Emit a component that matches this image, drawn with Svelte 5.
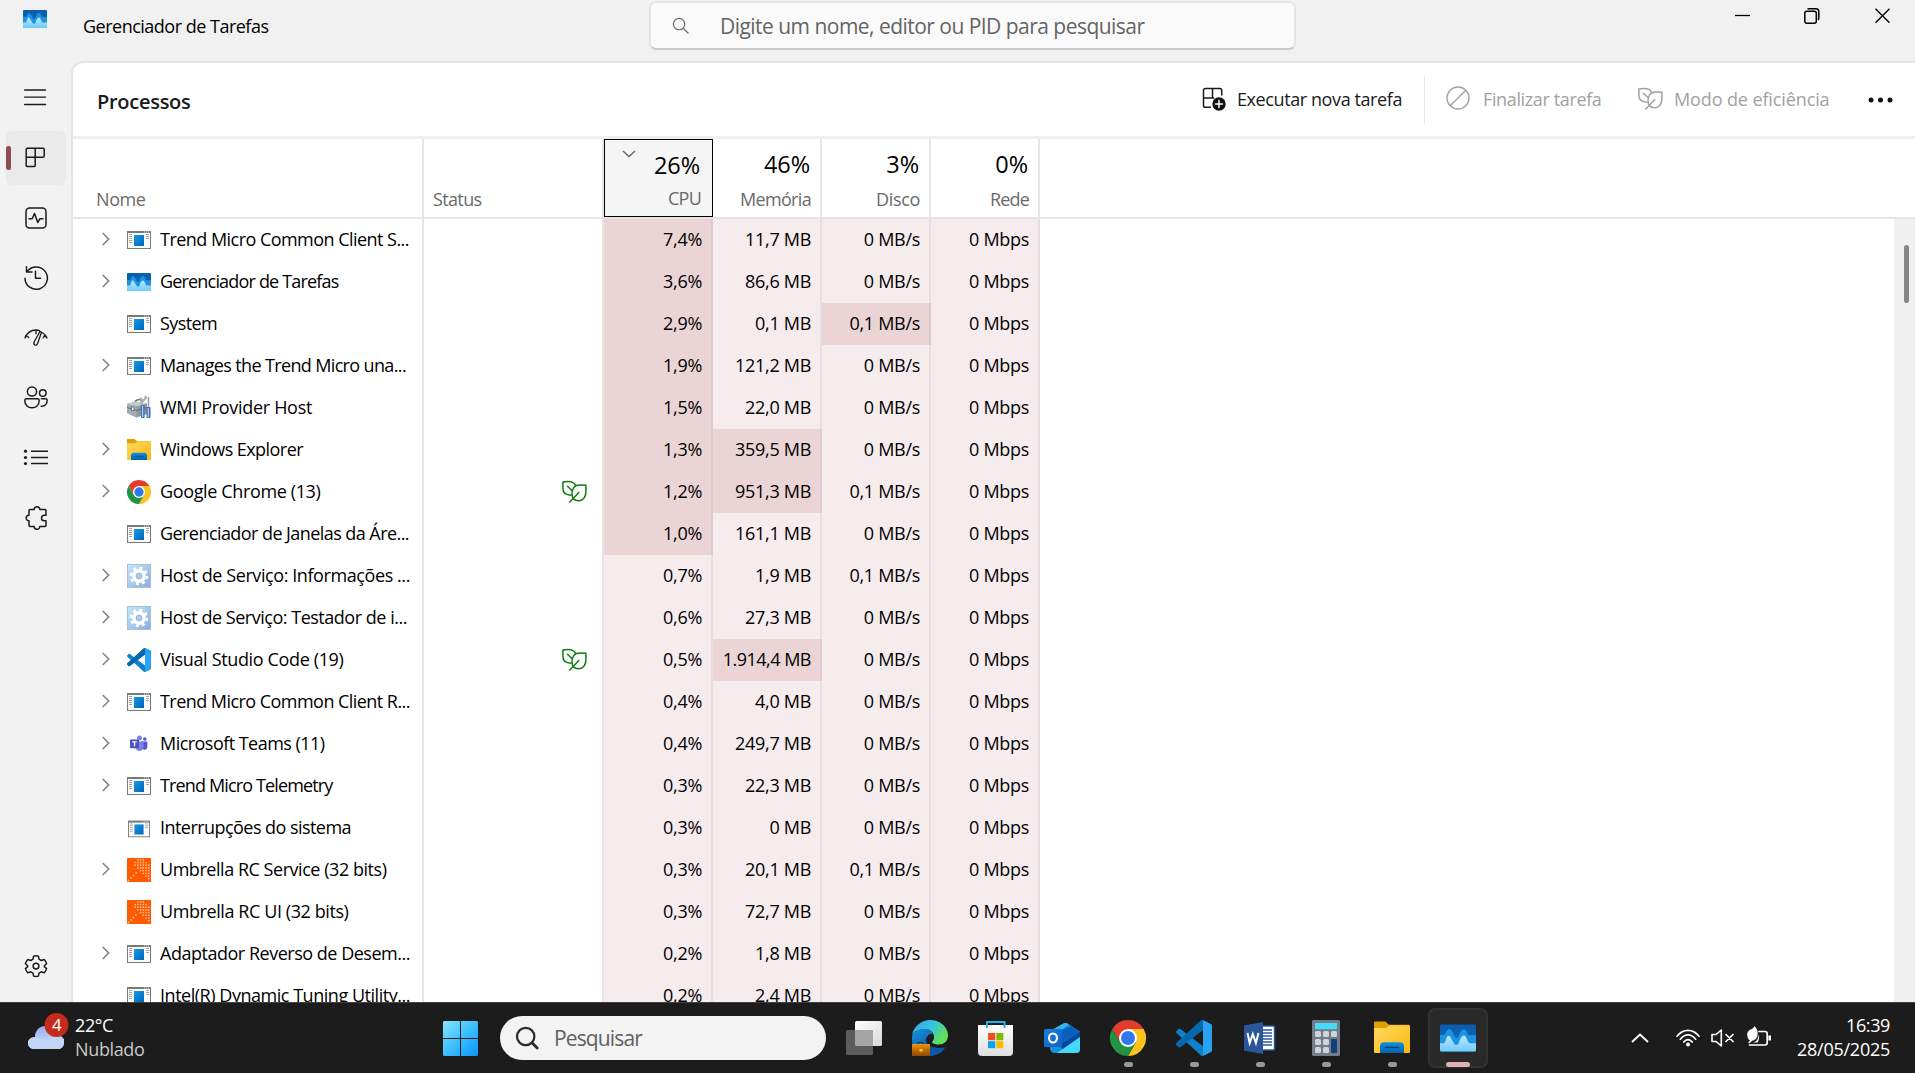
<script>
  const processes = [
    { name: 'Trend Micro Common Client S...', w: 249, icon: 'app', open: true, v: ['7,4%', '11,7 MB', '0 MB/s', '0 Mbps'], hot: [0] },
    { name: 'Gerenciador de Tarefas', w: 178.5, icon: 'taskmgr', open: true, v: ['3,6%', '86,6 MB', '0 MB/s', '0 Mbps'], hot: [0] },
    { name: 'System', w: 57, icon: 'app', v: ['2,9%', '0,1 MB', '0,1 MB/s', '0 Mbps'], hot: [0, 2] },
    { name: 'Manages the Trend Micro una...', w: 246, icon: 'app', open: true, v: ['1,9%', '121,2 MB', '0 MB/s', '0 Mbps'], hot: [0] },
    { name: 'WMI Provider Host', w: 152, icon: 'wmi', v: ['1,5%', '22,0 MB', '0 MB/s', '0 Mbps'], hot: [0] },
    { name: 'Windows Explorer', w: 143, icon: 'folder', open: true, v: ['1,3%', '359,5 MB', '0 MB/s', '0 Mbps'], hot: [0, 1] },
    { name: 'Google Chrome (13)', w: 160.5, icon: 'chrome', open: true, leaf: true, v: ['1,2%', '951,3 MB', '0,1 MB/s', '0 Mbps'], hot: [0, 1] },
    { name: 'Gerenciador de Janelas da Áre...', w: 249, icon: 'app', v: ['1,0%', '161,1 MB', '0 MB/s', '0 Mbps'], hot: [0] },
    { name: 'Host de Serviço: Informações ...', w: 250, icon: 'gear', open: true, v: ['0,7%', '1,9 MB', '0,1 MB/s', '0 Mbps'], hot: [] },
    { name: 'Host de Serviço: Testador de i...', w: 247, icon: 'gear', open: true, v: ['0,6%', '27,3 MB', '0 MB/s', '0 Mbps'], hot: [] },
    { name: 'Visual Studio Code (19)', w: 183.5, icon: 'vscode', open: true, leaf: true, v: ['0,5%', '1.914,4 MB', '0 MB/s', '0 Mbps'], hot: [1] },
    { name: 'Trend Micro Common Client R...', w: 250, icon: 'app', open: true, v: ['0,4%', '4,0 MB', '0 MB/s', '0 Mbps'], hot: [] },
    { name: 'Microsoft Teams (11)', w: 164.5, icon: 'teams', open: true, v: ['0,4%', '249,7 MB', '0 MB/s', '0 Mbps'], hot: [] },
    { name: 'Trend Micro Telemetry', w: 172.5, icon: 'app', open: true, v: ['0,3%', '22,3 MB', '0 MB/s', '0 Mbps'], hot: [] },
    { name: 'Interrupções do sistema', w: 191, icon: 'appsmall', v: ['0,3%', '0 MB', '0 MB/s', '0 Mbps'], hot: [] },
    { name: 'Umbrella RC Service (32 bits)', w: 226.5, icon: 'umbrella', open: true, v: ['0,3%', '20,1 MB', '0,1 MB/s', '0 Mbps'], hot: [] },
    { name: 'Umbrella RC UI (32 bits)', w: 188.5, icon: 'umbrella', v: ['0,3%', '72,7 MB', '0 MB/s', '0 Mbps'], hot: [] },
    { name: 'Adaptador Reverso de Desem...', w: 250, icon: 'app', open: true, v: ['0,2%', '1,8 MB', '0 MB/s', '0 Mbps'], hot: [] },
    { name: 'Intel(R) Dynamic Tuning Utility...', w: 250, icon: 'app', v: ['0,2%', '2,4 MB', '0 MB/s', '0 Mbps'], hot: [] }
  ];

  const columns = [
    { pct: '26%', label: 'CPU', lw: 33, sorted: true },
    { pct: '46%', label: 'Memória', lw: 71 },
    { pct: '3%', label: 'Disco', lw: 44 },
    { pct: '0%', label: 'Rede', lw: 39 }
  ];

  const nav = ['processes', 'performance', 'history', 'startup', 'users', 'details', 'services'];

  const taskbar = [
    { icon: 'taskview' },
    { icon: 'edge' },
    { icon: 'store' },
    { icon: 'outlook' },
    { icon: 'chrome', running: true },
    { icon: 'vscode', running: true },
    { icon: 'word', running: true },
    { icon: 'calc', running: true },
    { icon: 'folder', running: true },
    { icon: 'taskmgr', running: true, active: true }
  ];

  // Tightens or loosens letter spacing so a label occupies the given width.
  function fit(node, width) {
    const n = node.textContent.length;
    const natural = node.getBoundingClientRect().width;
    node.style.letterSpacing = (width - natural) / n + 'px';
  }

  const dots = [];
  for (let r = 0; r < 8; r++) {
    for (let c = 0; c < 8; c++) {
      if (c > r - 0.5 && r + c > 2 && c - r < 5 - r * 0.1 + 1) dots.push([2.8 + c * 2.7, 1.8 + r * 2.7]);
    }
  }
</script>

{#snippet leaf()}
  <svg class="leaf" viewBox="0 0 25 22" fill="none" stroke="currentColor" stroke-width="1.5" stroke-linecap="round" stroke-linejoin="round">
    <path d="M9 14.2C4 14 .9 11.500 .9 7.500V1.100C5 .3 11.500 .2 13.500 4.300" />
    <path d="M23.900 4.200V11c0 5-3 8.700-7.200 8.700-4.200 0-6.700-2.600-6.700-6.600 0-5.400 2-9.200 8-9.200 2.200 0 4 .1 5.900.3z" />
    <path d="M5.500 5.200l4.200 4M16.800 11.500l-9 9.500" />
  </svg>
{/snippet}

{#snippet picture(kind)}
  {#if kind === 'app' || kind === 'appsmall'}
    <svg viewBox="0 0 24 24" class:small={kind === 'appsmall'}>
      <defs><linearGradient id="appg" x1="0" y1="0" x2="1" y2="1"><stop offset="0" stop-color="#149be6" /><stop offset="1" stop-color="#0463b8" /></linearGradient></defs>
      <rect x=".5" y="3.500" width="23" height="17" fill="#fafafa" stroke="#7a7a77" />
      <rect x="0" y="3" width="24" height="2" fill="#7a7a77" />
      <path d="M17 4h1m1 0h1m1 0h1" stroke="#e8e8e8" />
      <path d="M2 6.500h3M2 8.500h3M2 10.500h3M2 12.500h3M2 14.500h3M19 6.500h3M19 8.500h3M19 10.500h3" stroke="#a4a4a4" />
      <rect x="7" y="7" width="10" height="11" fill="url(#appg)" />
    </svg>
  {:else if kind === 'taskmgr'}
    <svg viewBox="0 0 24 24">
      <defs>
        <linearGradient id="tm1" x1="0" y1="0" x2="0" y2="1"><stop offset="0" stop-color="#0a5cad" /><stop offset="1" stop-color="#0f6fc4" /></linearGradient>
        <linearGradient id="tm2" x1="0" y1="0" x2="0" y2="1"><stop offset="0" stop-color="#b9e6ff" /><stop offset="1" stop-color="#6fcbfa" /></linearGradient>
      </defs>
      <rect y="3" width="24" height="18" rx="1" fill="url(#tm1)" />
      <path d="M0 10h2.500C4 10 4 6.200 6 6.200c1.500 0 1.700 1 2.600 2.300.7 1.200 1.100 3.500 2.400 3.500 1.500 0 1.700-2.300 2.500-3.800.7-1.100 1-2.100 2.500-2.100 2 0 2.200 4.100 3.700 4.100H24V20H0z" fill="#1c93dd" />
      <path d="M0 15.500h2.500c1.300 0 1.600-5 3.200-5 1.200 0 1.500 1.500 2.300 2.800.9 1.300 1.500 3.400 3 3.400 1.600 0 1.800-2.900 2.700-4.300.7-1 1.200-2 2.300-2 1.900 0 2.200 5.100 4 5.100h4V20a1 1 0 0 1-1 1H1a1 1 0 0 1-1-1z" fill="url(#tm2)" />
    </svg>
  {:else if kind === 'wmi'}
    <svg viewBox="0 0 24 24">
      <path d="M8 6.500c0-3 6-4 6.500-1.500v2" fill="none" stroke="#70777c" stroke-width="1.500" />
      <path d="M0 8l9-2.500 11 2V18L9.500 21.500 0 17z" fill="#8c979e" />
      <path d="M0 8l9-2.500 11 2-10.500 3z" fill="#c3cbd0" />
      <path d="M0 8l9.500 2.500v11L0 17z" fill="#a4adb3" />
      <path d="M0 11.500l9.500 3 10-3" fill="none" stroke="#5f696f" />
      <rect x="4.500" y="11" width="2.500" height="3.500" fill="#edf1f3" stroke="#575f64" stroke-width=".7" />
      <path d="M13 2l3 3 3-3-1-2M15 4l-1 6" stroke="#a7adb1" stroke-width="2" fill="none" />
      <path d="M21.500 1v10" stroke="#9aa0a5" stroke-width="1.600" />
      <rect x="14" y="9" width="3.600" height="13" rx="1" fill="#3e6fb4" /><rect x="15" y="10" width="1.200" height="11" fill="#b8d3f3" />
      <rect x="19.500" y="11" width="4" height="11" rx="1" fill="#3e6fb4" /><rect x="20.700" y="12" width="1.200" height="9" fill="#b8d3f3" />
    </svg>
  {:else if kind === 'folder'}
    <svg viewBox="0 0 24 24">
      <defs>
        <linearGradient id="fo1" x1="0" y1="0" x2="1" y2="1"><stop offset="0" stop-color="#ffd961" /><stop offset="1" stop-color="#fbb80d" /></linearGradient>
        <linearGradient id="fo2" x1="0" y1="0" x2="0" y2="1"><stop offset="0" stop-color="#1392de" /><stop offset="1" stop-color="#0560b0" /></linearGradient>
      </defs>
      <path d="M0 1.800q0-.8.800-.8H7.500L10 3.200H23q1 0 1 1V8H0z" fill="#dfa006" />
      <path d="M0 5.300H8L10.500 3.500H23.200q.8 0 .8.800V21.200q0 .8-.8.800H.8q-.8 0-.8-.8z" fill="url(#fo1)" />
      <path d="M4 22v-4.500q0-2.700 2.700-2.700h10.600q2.700 0 2.700 2.700V22z" fill="url(#fo2)" />
      <path d="M7.200 18.300h9.600" stroke="#05427f" stroke-width=".9" />
    </svg>
  {:else if kind === 'chrome'}
    <svg viewBox="0 0 48 48">
      <path d="M3.215 12A24 24 0 0 1 44.785 12L46 14.500H24L13.600 30z" fill="#e33b2e" />
      <path d="M44.785 12A24 24 0 0 1 24 48L34.392 30 24 12z" fill="#fcc31e" />
      <path d="M24 48A24 24 0 0 1 3.215 12L13.608 30 34.392 30z" fill="#229342" />
      <circle cx="24" cy="24" r="12" fill="#fff" /><circle cx="24" cy="24" r="9.300" fill="#3079ec" />
    </svg>
  {:else if kind === 'gear'}
    <svg viewBox="0 0 24 24">
      <defs><linearGradient id="ge" x1="0" y1="0" x2="1" y2="1"><stop offset="0" stop-color="#c2eafb" /><stop offset="1" stop-color="#8aaae2" /></linearGradient></defs>
      <rect x=".5" y=".5" width="23" height="23" fill="url(#ge)" stroke="#a9c0d2" />
      <circle cx="12" cy="12" r="8" fill="none" stroke="#fff" stroke-width="2.600" stroke-dasharray="3.140 3.140" />
      <circle cx="12" cy="12" r="4.900" fill="none" stroke="#fff" stroke-width="4" />
      <circle cx="12" cy="12" r="3" fill="#a9cdf0" stroke="#8ba9cf" stroke-width=".7" />
    </svg>
  {:else if kind === 'vscode'}
    <svg viewBox="0 0 24 24">
      <path d="M23.150 2.587L18.210.21a1.494 1.494 0 0 0-1.705.29l-9.460 8.630-4.120-3.128a.999.999 0 0 0-1.276.057L.327 7.261A1 1 0 0 0 .326 8.740L3.899 12 .326 15.260a1 1 0 0 0 .001 1.479L1.650 17.940a.999.999 0 0 0 1.276.057l4.120-3.128 9.460 8.630a1.492 1.492 0 0 0 1.704.29l4.942-2.377A1.500 1.500 0 0 0 24 20.060V3.939a1.500 1.500 0 0 0-.85-1.352zm-5.146 14.861L10.826 12l7.178-5.448v10.896z" fill="#0f80cc" />
      <path d="M7.045 9.130L3.899 12 .326 15.260a1 1 0 0 0 .001 1.479L1.650 17.940a1 1 0 0 0 1.276.057L18 6.550V.15L16.500.5z" fill="#0568ac" />
      <path d="M18.004.12L23.150 2.587A1.500 1.500 0 0 1 24 3.939V20.060a1.500 1.500 0 0 1-.85 1.352L18.004 23.880z" fill="#27a3f1" />
    </svg>
  {:else if kind === 'teams'}
    <svg viewBox="0 0 24 24">
      <circle cx="12.500" cy="6" r="2.500" fill="#7b83eb" /><circle cx="17.800" cy="7" r="1.800" fill="#5059c9" />
      <path d="M14 9.500h6.300v5.200a3 3 0 0 1-4 2.800z" fill="#5059c9" />
      <path d="M8.500 9.500h8v5.700a4.200 4.200 0 0 1-8 1.300z" fill="#7b83eb" />
      <rect x="3" y="7.500" width="9" height="8.700" rx=".8" fill="#4b53bc" />
      <path d="M5.300 9.900h4.400M7.500 9.900v4.300" stroke="#fff" stroke-width="1.300" />
    </svg>
  {:else if kind === 'umbrella'}
    <svg viewBox="0 0 24 24">
      <rect width="24" height="24" rx=".6" fill="#ff5a00" />
      {#each dots as [x, y]}<circle cx={x} cy={y} r=".85" fill="#ffc09c" />{/each}
      <g fill="#ffc09c"><circle cx="1.500" cy="22.500" r=".9" /><circle cx="4" cy="20" r=".9" /><circle cx="6.500" cy="17.500" r=".9" /><circle cx="9" cy="15" r=".9" /></g>
    </svg>
  {:else if kind === 'taskview'}
    <svg viewBox="0 0 36 36">
      <defs><linearGradient id="tv" x1="0" y1="0" x2="1" y2="1"><stop offset="0" stop-color="#fff" /><stop offset="1" stop-color="#d8d8d8" /></linearGradient></defs>
      <rect x="9" y="1" width="27" height="25" rx="1.500" fill="url(#tv)" />
      <rect y="10" width="27" height="25" rx="1.500" fill="#5c5c5c" />
      <path d="M9 10h16.500q1.500 0 1.500 1.500V26H10.500Q9 26 9 24.500z" fill="#a5a5a5" />
    </svg>
  {:else if kind === 'edge'}
    <svg viewBox="0 0 36 36">
      <defs>
        <linearGradient id="ed1" x1="0" y1="0" x2="1" y2=".5"><stop offset="0" stop-color="#2fa9f2" /><stop offset=".55" stop-color="#35c4dc" /><stop offset="1" stop-color="#61e356" /></linearGradient>
        <linearGradient id="ed2" x1="0" y1="0" x2=".6" y2="1"><stop offset="0" stop-color="#1593dc" /><stop offset="1" stop-color="#0a56ac" /></linearGradient>
        <linearGradient id="ed3" x1="0" y1="0" x2="0" y2="1"><stop offset="0" stop-color="#ee9513" /><stop offset=".5" stop-color="#c06a08" /><stop offset="1" stop-color="#8d4a02" /></linearGradient>
      </defs>
      <path d="M18 36c6.500 0 12.500-3.600 15.500-9-4 1.300-10 1.500-13-1.500-3-2.700-5.500-7-3.500-12L4 12C1 15 0 18 0 20v6z" fill="#0e58a9" />
      <path d="M0 18c0-5 6-9 12-9 4 0 8 2 9 5-5-1-7 4-7 8 0 5 2 11 6 13.800C7 37 0 28 0 18z" fill="url(#ed2)" />
      <path d="M0 16C1 7 9 0 18 0c10.500 0 18 7.500 18 15.500 0 6-4.500 9-9.500 9-4 0-7-1.300-7-2.700 0-.8 2.500-2 2.500-5.300 0-4-4-7.500-9.500-7.500C6.500 9 1.500 12 0 16z" fill="url(#ed1)" />
      <path d="M20.500 14.500c-3.500-.7-6.500 2-6.500 5.500 0 2.500 1.500 4.500 3 5.500 5 3 12 2.200 16.500-.5-4.500.5-12 .500-13.500-2.500 0-1.500 2-2.500 2-5 0-1.200-.5-2.200-1.500-3z" fill="#1c1c1c" />
      <path d="M6 24v-1.500h5V24" fill="none" stroke="#3b2504" stroke-width="1" />
      <rect y="24" width="18" height="12" fill="url(#ed3)" /><rect x="7.500" y="29" width="3" height="2.500" fill="#ffd02e" />
    </svg>
  {:else if kind === 'store'}
    <svg viewBox="0 0 36 36">
      <defs><linearGradient id="st" x1="0" y1="0" x2="0" y2="1"><stop offset="0" stop-color="#fff" /><stop offset="1" stop-color="#dedede" /></linearGradient></defs>
      <path d="M0 5h35v27q0 4-4 4h-27q-4 0-4-4z" fill="url(#st)" />
      <path d="M9 8V2h17.500v6" fill="none" stroke="#25b2ea" stroke-width="1.900" />
      <path d="M10 13h7.300v7.300h-7.300z" fill="#f25022" /><path d="M18.300 13h7v7.300h-7z" fill="#7fba00" />
      <path d="M10 21.200h7.300v7h-7.300z" fill="#00a4ef" /><path d="M18.300 21.200h7v7h-7z" fill="#ffb900" />
    </svg>
  {:else if kind === 'outlook'}
    <svg viewBox="0 0 36 36">
      <defs><linearGradient id="ou" x1="0" y1="0" x2="1" y2="1"><stop offset="0" stop-color="#1a7fdc" /><stop offset="1" stop-color="#0a62c4" /></linearGradient></defs>
      <path d="M6 11L20 3.300q1.500-.8 3 0L36 11.500V29q0 4-4 4H11q-5 0-5-5z" fill="#1791dc" />
      <path d="M6 11L20 3.300q1.500-.8 3 0l2 1.200L12 13z" fill="#35b7ee" />
      <path d="M27 6l9 5.700v1L18 24v-8L14 12z" fill="#0a60c0" />
      <path d="M36 12v8L19 30l-3-5z" fill="#08459a" />
      <path d="M36 17v12q0 4-4 4H13z" fill="#46d8fb" />
      <rect y="9" width="18" height="18" rx="1.500" fill="url(#ou)" />
      <ellipse cx="9" cy="18" rx="4" ry="4.500" fill="none" stroke="#fff" stroke-width="2.200" />
    </svg>
  {:else if kind === 'word'}
    <svg viewBox="0 0 36 36">
      <rect x="17" y="6" width="15.500" height="24" rx="1" fill="#fff" stroke="#2b579a" stroke-width="1.500" />
      <path d="M19 10h11M19 13h11M19 16h11M19 19h11M19 22h11M19 25h11" stroke="#2b579a" stroke-width="1.300" />
      <path d="M2 5.500L21 2v32L2 30.500z" fill="#2b579a" />
      <path d="M5.500 13l2.200 10L10.800 14l3.100 9 2.600-10" fill="none" stroke="#fff" stroke-width="2" />
    </svg>
  {:else if kind === 'calc'}
    <svg viewBox="0 0 36 36">
      <rect x="4" width="28" height="36" rx="1.500" fill="#737b84" />
      <rect x="7" y="3" width="22" height="6.200" rx=".8" fill="#45dcfb" />
      <g fill="#cfd3dc">
        <rect x="7" y="11" width="6" height="6" rx="1.500" /><rect x="15" y="11" width="6" height="6" rx="1.500" /><rect x="23" y="11" width="6" height="6" rx="1.500" />
        <rect x="7" y="19" width="6" height="6" rx="1.500" /><rect x="15" y="19" width="6" height="6" rx="1.500" />
        <rect x="7" y="27" width="6" height="6" rx="1.500" /><rect x="15" y="27" width="6" height="6" rx="1.500" />
      </g>
      <rect x="23" y="19" width="6" height="14" rx="1" fill="#10407f" />
    </svg>
  {/if}
{/snippet}

{#snippet navIcon(kind)}
  <svg class="nav-icon" viewBox="0 0 24 24" fill="none" stroke="#1b1b1b" stroke-width="1.500" stroke-linecap="round" stroke-linejoin="round">
    {#if kind === 'menu'}
      <path d="M.6 4h21M.6 11.200h21M.6 18.500h21" stroke-width="1.300" />
    {:else if kind === 'processes'}
      <path d="M3.500 2.200H19q1.200 0 1.200 1.200v6.600q0 1.200-1.200 1.200H2.200M11.200 2.200v17.200q0 1.200-1.200 1.200H3.400q-1.200 0-1.200-1.200V3.400q0-1.200 1.200-1.200" />
    {:else if kind === 'performance'}
      <rect x="2" y="2" width="20" height="20" rx="3.500" />
      <path d="M5 12.800h3.200l2.300-5.300 3.300 9 2-3.700H19" />
    {:else if kind === 'history'}
      <path d="M2.500.7v5.300H8M3 5.700A11.200 11.200 0 1 1 1 12.200M11.500 5.200v7h5" />
    {:else if kind === 'startup'}
      <path d="M1 12C3 7 7 4 12 4c1.500 0 2.500.2 3.500.6M1 12l.8-2.500 3 2M12 4.200v3.500M16 5.500l-5.500 9.800c-2 3.800 1.800 5.500 3.200 2L17.500 6.200zM18.500 6.800c2 1.200 3.500 3 4.500 5.200M19 12l1.500-2.500L23 12" stroke-width="1.300" />
    {:else if kind === 'users'}
      <circle cx="8" cy="5.500" r="4.600" /><circle cx="18.800" cy="7" r="3.300" />
      <path d="M2.500 12.700h11q1.700 0 1.700 1.700c0 5-3.500 7.300-7.200 7.300S.8 19.500 .8 14.400q0-1.700 1.700-1.700zM17.500 12.700h4q1.700 0 1.700 1.500c0 4-2.500 6.300-6 6" />
    {:else if kind === 'details'}
      <path d="M7 5.200h17M7 11.500h17M7 17.500h17" stroke-linecap="butt" /><g fill="#1b1b1b" stroke="none"><circle cx="1.500" cy="5.200" r="1.600" /><circle cx="1.500" cy="11.500" r="1.600" /><circle cx="1.500" cy="17.500" r="1.600" /></g>
    {:else if kind === 'services'}
      <path d="M10.200 3.500a2.800 2.800 0 0 1 5.600 0H20.800q1.200 0 1.200 1.200V9.200H20.300a2.800 2.800 0 0 0 0 5.600H22V19.300q0 1.200-1.200 1.200H15.800a2.800 2.800 0 0 1-5.600 0H6.200q-1.200 0-1.200-1.200V14.800a2.800 2.800 0 0 1 0-5.600V4.700q0-1.200 1.200-1.200z" />
    {:else if kind === 'settings'}
      <path d="M9.600 2.200q2.400-.8 4.800 0l.6 3 2.300 1.300 2.900-1q1.800 1.900 2.400 4.200L20.300 11.700v.9l2.300 2q-.7 2.400-2.400 4.200l-2.900-1L15 19.100l-.6 3q-2.400.7-4.800 0l-.6-3-2.300-1.300-2.900 1Q2.100 16.900 1.400 14.600l2.300-2v-.9L1.400 9.700Q2.100 7.400 3.800 5.500l2.900 1L9 5.200z" />
      <circle cx="12" cy="12.100" r="2.900" />
    {/if}
  </svg>
{/snippet}

<div class="screen">
  <div class="window">
    <header class="titlebar">
      <div class="app-icon">{@render picture('taskmgr')}</div>
      <div class="title"><span use:fit={185.5}>Gerenciador de Tarefas</span></div>
      <div class="search">
        <svg viewBox="0 0 18 18" fill="none" stroke="#6a6a6a" stroke-width="1.300"><circle cx="7.500" cy="7.500" r="6" /><path d="M11.900 11.900l5.600 5.600" /></svg>
        <span use:fit={424.5}>Digite um nome, editor ou PID para pesquisar</span>
      </div>
      <div class="controls">
        <svg viewBox="0 0 16 16" fill="none" stroke="#000" stroke-width="1.300"><path d="M0 7.500h15" /></svg>
        <svg viewBox="0 0 16 16" fill="none" stroke="#000" stroke-width="1.500"><rect x="-.2" y="3.200" width="11.500" height="12" rx="2" /><path d="M2.500 1.200Q3 .8 4 .8h7q2.800 0 2.800 2.800v6.400q0 1.300-.8 2" /></svg>
        <svg viewBox="0 0 16 16" fill="none" stroke="#000" stroke-width="1.400"><path d="M.5.800l14 14M14.500.8l-14 14" /></svg>
      </div>
    </header>

    <div class="body">
      <nav>
        <div class="item">{@render navIcon('menu')}</div>
        {#each nav as n, i}
          <div class="item" class:selected={i === 0}>{@render navIcon(n)}</div>
        {/each}
        <div class="item settings">{@render navIcon('settings')}</div>
      </nav>

      <main>
        <div class="toolbar">
          <h1><span use:fit={93.5}>Processos</span></h1>
          <div class="action run">
            <svg viewBox="0 0 24 24" fill="none" stroke="#1a1a1a" stroke-width="1.500" stroke-linecap="round" stroke-linejoin="round">
              <path d="M8.500 20.300H3.200q-1.700 0-1.700-1.700V3.200q0-1.700 1.700-1.700H18q1.700 0 1.700 1.700V8M10.500 1.500V11M1.500 11h10.300" />
              <circle cx="17" cy="17" r="6.700" fill="#111" stroke="none" /><path d="M17 13.500v7M13.500 17h7" stroke="#fff" />
            </svg>
            <span use:fit={165}>Executar nova tarefa</span>
          </div>
          <div class="action end">
            <svg viewBox="0 0 24 24" fill="none" stroke="currentColor" stroke-width="1.400"><circle cx="12" cy="12" r="11" /><path d="M19.800 4.200L4.200 19.800" /></svg>
            <span use:fit={118.5}>Finalizar tarefa</span>
          </div>
          <div class="action eco">
            {@render leaf()}
            <span use:fit={155.5}>Modo de eficiência</span>
          </div>
          <svg class="more" viewBox="0 0 26 6"><circle cx="3" cy="3" r="2.500" /><circle cx="12.500" cy="3" r="2.500" /><circle cx="22" cy="3" r="2.500" /></svg>
        </div>

        <div class="grid head">
          <div class="cell hname"><span use:fit={49.5}>Nome</span></div>
          <div class="cell hstatus"><span use:fit={48.5}>Status</span></div>
          {#each columns as c}
            <div class="cell metric" class:sorted={c.sorted}>
              {#if c.sorted}<svg class="caret" viewBox="0 0 14 8" fill="none" stroke="#666" stroke-width="1.400"><path d="M1 1l6 5.500L13 1" /></svg>{/if}
              <b>{c.pct}</b>
              <span class="label"><span use:fit={c.lw}>{c.label}</span></span>
            </div>
          {/each}
        </div>

        <div class="list">
          <div class="rows">
            {#each processes as p}
              <div class="grid row">
                <div class="cell name">
                  <svg class="chev" viewBox="0 0 9 14" fill="none" stroke="#858585" stroke-width="1.600">{#if p.open}<path d="M.7 1l6 6-6 6" />{/if}</svg>
                  <div class="picture">{@render picture(p.icon)}</div>
                  <span class="text"><span use:fit={p.w}>{p.name}</span></span>
                </div>
                <div class="cell status">{#if p.leaf}{@render leaf()}{/if}</div>
                {#each p.v as v, i}
                  <div class="cell value" class:long={v.length > 9} class:hot={p.hot.includes(i)}><span>{v}</span></div>
                {/each}
              </div>
            {/each}
          </div>
          <div class="scroll"><div class="thumb"></div></div>
        </div>
      </main>
    </div>
  </div>

  <footer>
    <div class="weather">
      <svg viewBox="0 0 42 36">
        <defs><linearGradient id="cl" x1="0" y1="0" x2="0" y2="1"><stop offset="0" stop-color="#8fb0f0" /><stop offset="1" stop-color="#dbe6fb" /></linearGradient></defs>
        <path d="M6 35a6 6 0 0 1 0-12h1C7 17 11 12 17 12c6 0 9 4 10 9 5-1 9 2 9 7 0 4-2 7-6 7z" fill="url(#cl)" />
        <path d="M0 29c0-4 4-6 8-5 5 0 7 4 11 3 5-4 10-6 17-2v3c0 4-2 7-6 7H6c-3.500 0-6-2.500-6-6z" fill="#c4d6f8" />
        <circle cx="28.500" cy="11" r="12" fill="#c42b1c" />
        <text x="28.800" y="16.500" text-anchor="middle" font-size="17" fill="#fff">4</text>
      </svg>
      <div class="lines"><span><span use:fit={38}>22°C</span></span><span class="dim"><span use:fit={69.5}>Nublado</span></span></div>
    </div>
    <svg class="start" viewBox="0 0 35 35">
      <defs><linearGradient id="wi" gradientUnits="userSpaceOnUse" x1="0" y1="0" x2="35" y2="35"><stop offset="0" stop-color="#8ce4ff" /><stop offset=".5" stop-color="#3cc0fc" /><stop offset="1" stop-color="#0a94fb" /></linearGradient></defs>
      <path d="M1 0h16v17H0V1zM18 0h16l1 1v16H18zM0 18h17v17H1l-1-1zM18 18h17v16l-1 1H18z" fill="url(#wi)" />
    </svg>
    <div class="pill">
      <svg viewBox="0 0 24 24" fill="none" stroke="#2a2a2a" stroke-width="2.200" stroke-linecap="round"><circle cx="9.700" cy="10.500" r="8.700" /><path d="M16.200 17l5 5" stroke-width="2.800" /></svg>
      <span use:fit={88}>Pesquisar</span>
    </div>
    <div class="apps">
      {#each taskbar as t}
        <div class="slot">
          <div class="tile" class:active={t.active}>
            {@render picture(t.icon)}
            {#if t.running}<i></i>{/if}
          </div>
        </div>
      {/each}
    </div>
    <div class="tray">
      <svg class="up" viewBox="0 0 18 10" fill="none" stroke="#fff" stroke-width="2"><path d="M1 9l8-7.500L17 9" /></svg>
      <svg class="wifi" viewBox="0 0 24 18" fill="none" stroke="#fff" stroke-width="1.700" stroke-linecap="round"><path d="M1 7.200C7-.7 17-.7 23 7.200M4.300 10.200c4.500-5.800 10.900-5.800 15.400 0M7.800 13c2.500-3.200 5.900-3.200 8.400 0" /><circle cx="12" cy="15.500" r="2" fill="#fff" stroke="none" /></svg>
      <svg class="sound" viewBox="0 0 24 18" fill="none" stroke="#fff" stroke-width="1.600" stroke-linejoin="round"><path d="M1 5.500h4L10.300 1v16L5 12.500H1zM14.500 5l8 8M22.500 5l-8 8" /></svg>
      <svg class="battery" viewBox="0 0 25 21" fill="none" stroke="#fff" stroke-width="1.700"><path d="M12 5.500h6q2.200 0 2.200 2.200v9.100q0 2.200-2.200 2.200H2.500" stroke-linecap="round" /><path d="M22.700 9.500v5" stroke-width="2.600" /><path d="M7.500 0c3 3 3.500 6 3 9-.6 4-3 5.500-5 5.500L2 17.500l-.8-1L3 14.500C-.5 12-.6 6.500 2 4.500 4 3 6.500 3 7.500 0zM11.500 8c1 3 .8 6-1 8.500H5.500c4 0 6-4 6-8.500z" fill="#fff" stroke="none" /></svg>
      <div class="clock"><span><span use:fit={44}>16:39</span></span><span><span use:fit={93}>28/05/2025</span></span></div>
    </div>
  </footer>
</div>

<style>
  :global(body) { margin: 0; overflow: hidden; }
  .screen { width: 1915px; height: 1073px; display: flex; flex-direction: column; overflow: hidden; background: #f2f2f2; color: #000; font: 18px/24px 'Open Sans', 'Noto Sans', sans-serif; }
  .screen span, b, h1 { white-space: nowrap; }
  svg { display: block; flex: none; overflow: visible; }
  .window { height: 1002px; display: flex; flex-direction: column; }

  .titlebar { height: 61px; flex: none; display: flex; align-items: flex-start; background: #f1f1f1; }
  .app-icon { width: 24px; margin: 7px 36px 0 23px; }
  .title { width: 566px; margin-top: 14px; }
  .search { box-sizing: border-box; width: 647px; height: 49px; margin-top: 1px; display: flex; align-items: center; padding: 0 0 0 21px; background: #fafafa; border: 2px solid #e5e5e5; border-bottom-color: #c9c9c9; border-radius: 7px; color: #646464; font-size: 21px; }
  .search svg { width: 17px; margin-right: 31px; }
  .controls { margin-left: auto; display: flex; gap: 54px; padding: 8px 24px 0 0; }
  .controls svg { width: 16px; height: 16px; }

  .body { flex: 1; min-height: 0; display: flex; }
  nav { width: 71px; flex: none; box-sizing: border-box; padding: 10px 5px 9px 6px; display: flex; flex-direction: column; gap: 6px; }
  .item { box-sizing: border-box; width: 60px; height: 54px; display: flex; align-items: center; padding-left: 18px; border-radius: 6px; }
  .item.selected { background: #eaeaea; padding-left: 0; }
  .item.selected::before { content: ''; width: 5px; height: 24px; margin-right: 13px; border-radius: 3px; background: #8f4c50; }
  .nav-icon { width: 24px; height: 24px; }
  .settings { margin-top: auto; }

  main { flex: 1; min-width: 0; display: flex; flex-direction: column; background: #fff; border: 2px solid #e5e5e5; border-width: 2px 0 0 2px; border-top-left-radius: 12px; overflow: hidden; }
  .toolbar { height: 73px; flex: none; display: flex; align-items: center; border-bottom: 3px solid #f0f0f0; }
  h1 { margin: 5px 0 0 24px; width: 1105px; font-size: 20px; line-height: 28px; font-weight: 600; color: #1a1a1a; }
  .action { display: flex; align-items: center; color: #a2a2a2; }
  .action span { padding-bottom: 1px; }
  .run { color: #1a1a1a; width: 222px; height: 48px; border-right: 1px solid #e8e8e8; }
  .action svg { margin-bottom: 1px; }
  .run svg { width: 24px; height: 24px; margin-right: 11px; }
  .end { width: 192px; padding-left: 21px; }
  .end svg { width: 24px; height: 24px; margin-right: 13px; margin-bottom: 3px; }
  .action .leaf { margin-right: 11px; }
  .leaf { width: 25px; height: 22px; }
  .more { width: 26px; margin-left: 38px; fill: #111; }

  .grid { display: grid; grid-template-columns: 351px 180px repeat(4, 109px); }
  .cell { box-sizing: border-box; border-right: 2px solid #e6e6e6; min-width: 0; }
  .head { flex: none; height: 78px; border-bottom: 2px solid #e5e5e5; color: #6a6a6a; }
  .hname, .hstatus { display: flex; align-items: flex-end; padding: 0 0 6px 23px; }
  .hstatus { padding-left: 9px; }
  .metric { position: relative; display: flex; flex-direction: column; align-items: flex-end; padding: 9px 9px 0 0; }
  .metric b { font-weight: 400; font-size: 23.5px; line-height: 32px; color: #000; letter-spacing: -.1px; margin-right: 1px; }
  .label { margin-top: 7px; }
  .metric.sorted { border: 1px solid #000; background: #f5f5f5; padding: 9px 11px 0 0; }
  .sorted .label { margin-top: 5px; }
  .caret { position: absolute; left: 17px; top: 10px; width: 14px; }

  .list { flex: 1; min-height: 0; display: flex; justify-content: space-between; }
  .rows { overflow: hidden; }
  .row { height: 42px; }
  .name { display: flex; align-items: center; padding-left: 29px; }
  .chev { width: 9px; height: 14px; margin: 0 16px 3px 0; }
  .picture { width: 24px; height: 24px; margin-right: 9px; }
  .picture svg.small { width: 22px; height: 22px; margin: 2px 1px; }
  .text, .value span { padding-bottom: 2px; }
  .status { display: flex; align-items: center; justify-content: flex-end; padding-right: 15px; color: #0f7b0f; }
  .value { display: flex; align-items: center; justify-content: flex-end; padding-right: 9px; background: #f6ecee; border-right-color: #e4dfe0; letter-spacing: -.3px; }
  .value.long { letter-spacing: -.5px; }
  .value.hot { background: #ead4d6; border-right-color: #dccbcd; }
  .scroll { width: 21px; background: #f0f0f0; display: flex; justify-content: center; }
  .thumb { width: 5px; height: 58px; margin-top: 26px; border-radius: 3px; background: #868686; margin-left: 4px; }

  footer { height: 71px; box-sizing: border-box; border-top: 1px solid #414141; background: #1c1c1c; color: #fff; display: flex; align-items: center; }
  .weather { width: 415px; padding-left: 28px; display: flex; align-items: center; }
  .weather svg { width: 42px; height: 36px; margin: 0 5px 12px 0; }
  .lines, .clock { display: flex; flex-direction: column; margin-bottom: 2px; }
  .dim { color: #c8c8c8; }
  .start { width: 35px; height: 35px; margin-right: 22px; }
  .pill { box-sizing: border-box; width: 326px; height: 44px; border-radius: 22px; background: #f3f3f3; display: flex; align-items: center; padding-left: 16px; color: #606060; font-size: 21px; }
  .pill svg { width: 24px; margin-right: 14px; }
  .apps { display: flex; margin-left: 5px; }
  .slot { width: 66px; display: flex; justify-content: center; }
  .tile { position: relative; box-sizing: border-box; width: 60px; height: 60px; border: 2px solid transparent; border-radius: 7px; display: flex; align-items: center; justify-content: center; }
  .tile.active { background: #292929; border-color: #333; }
  .tile svg { width: 36px; height: 36px; }
  .tile i { position: absolute; bottom: -1px; left: 24px; width: 9px; height: 5px; border-radius: 3px; background: #999; }
  .tile.active i { left: 16px; width: 24px; background: #dfb3b6; }
  .tray { margin-left: auto; display: flex; align-items: center; padding-right: 25px; }
  .up { width: 18px; margin-right: 27px; }
  .wifi { width: 24px; margin-right: 11px; }
  .sound { width: 24px; margin-right: 12px; }
  .battery { width: 25px; margin: 0 25px 4px 0; }
  .clock { align-items: flex-end; }
</style>
